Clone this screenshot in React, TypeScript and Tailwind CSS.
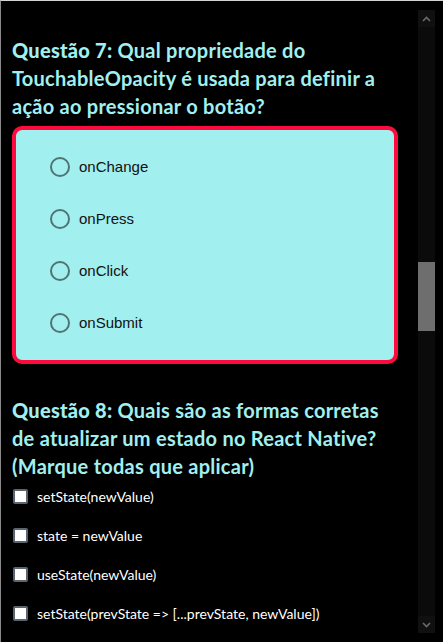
import React from 'react';

const options7 = ['onChange', 'onPress', 'onClick', 'onSubmit'];
const options8 = [
  'setState(newValue)',
  'state = newValue',
  'useState(newValue)',
  'setState(prevState => [...prevState, newValue])',
];

const headingFont = { fontFamily: 'Lato, "Open Sans", sans-serif' };

function Chevron({ up }: { up?: boolean }) {
  return (
    <svg width="9" height="6" viewBox="0 0 9 6" className="block">
      <path
        d={up ? 'M1 5 L4.5 1.5 L8 5' : 'M1 1 L4.5 4.5 L8 1'}
        fill="none"
        stroke="#6b6b6b"
        strokeWidth="1.6"
      />
    </svg>
  );
}

function Scrollbar() {
  return (
    <div className="flex w-[17px] flex-col bg-[#0b0b0b] mt-[9px] mb-[9px] mr-[8px]">
      <div className="flex h-[17px] items-center justify-center bg-[#101010]">
        <Chevron up />
      </div>
      <div className="h-[235px]" />
      <div className="h-[69px] bg-[#6e6e6e]" />
      <div className="flex-1" />
      <div className="flex h-[17px] items-center justify-center bg-[#101010]">
        <Chevron />
      </div>
    </div>
  );
}

export default function App() {
  return (
    <div className="flex h-[642px] w-[443px] overflow-hidden border-t border-l border-t-[#d4d4d4] border-l-[#8a8a8a] bg-black">
      <div className="flex-1 pl-[11px] pr-[20px] pt-[35px]">
        <h2 className="whitespace-nowrap text-[20px] leading-[28px] font-bold tracking-[0.25px] text-[#a2efef]" style={headingFont}>
          <span className="font-black">Questão 7:</span> Qual propriedade do
          <br />
          TouchableOpacity é usada para definir a
          <br />
          ação ao pressionar o botão?
        </h2>

        <div className="mt-[6px] rounded-[10px] border-4 border-[#ff0a3f] bg-[#a2efef] pl-[34px] py-[11px]">
          {options7.map((o) => (
            <div key={o} className="flex h-[52px] items-center gap-[9px]">
              <span className="h-[20px] w-[20px] rounded-full border-2 border-[#4f7474]" />
              <span className="text-[15px] text-[#111]" style={{ fontFamily: '"Liberation Sans", Arial, sans-serif' }}>
                {o}
              </span>
            </div>
          ))}
        </div>

        <h2 className="mt-[32px] whitespace-nowrap text-[20px] leading-[28px] font-bold tracking-[0.25px] text-[#a2efef]" style={headingFont}>
          <span className="font-black">Questão 8:</span> Quais são as formas corretas
          <br />
          de atualizar um estado no React Native?
          <br />
          (Marque todas que aplicar)
        </h2>

        <div className="mt-[6px] flex flex-col gap-[19px]">
          {options8.map((o) => (
            <label key={o} className="flex h-[20px] items-center gap-[9px]">
              <span className="ml-[1px] h-[15px] w-[15px] rounded-[2px] border-2 border-[#5b6570] bg-white" />
              <span className="text-[14px] text-white" style={headingFont}>
                {o}
              </span>
            </label>
          ))}
        </div>
      </div>
      <Scrollbar />
    </div>
  );
}
